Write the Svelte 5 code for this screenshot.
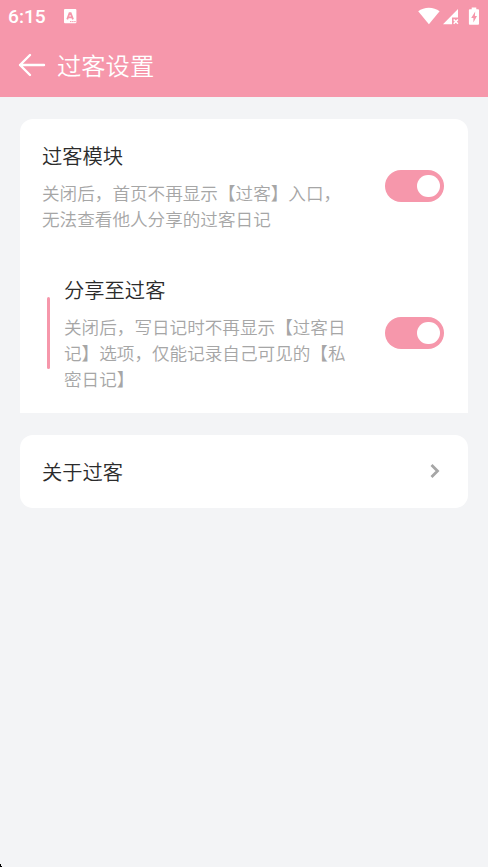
<script>
  let settings = $state([
    {
      title: "过客模块",
      desc: "关闭后，首页不再显示【过客】入口，无法查看他人分享的过客日记",
      on: true,
      nested: false
    },
    {
      title: "分享至过客",
      desc: "关闭后，写日记时不再显示【过客日记】选项，仅能记录自己可见的【私密日记】",
      on: true,
      nested: true
    }
  ]);

  function toggle(item) {
    item.on = !item.on;
  }
</script>

<div class="screen">
  <div class="status">
    <span class="time">6:15</span>
    <svg class="app-icon" width="13" height="15" viewBox="0 0 13 15">
      <rect width="12.4" height="14.3" rx="1" fill="#fff" />
      <path d="M3.2 10.4 5.5 4.2h1.2L9 10.4M4.2 8.3h3.8" fill="none" stroke="#f697ab" stroke-width="1.8" />
      <path d="M6 12.6h6" stroke="#f697ab" stroke-width="1" stroke-dasharray="1.5 .6" />
    </svg>
    <svg class="signals" width="64" height="20" viewBox="0 0 64 20">
      <path d="M.2 4.3C6-.6 15.8-.6 21.6 4.3L10.9 17.2Z" fill="#fff" />
      <path d="M40 2v8.5h-6v6.800H25Z" fill="#fff" />
      <path d="m35.700 12.500 4.200 4.300m0-4.300-4.200 4.300" stroke="#fff" stroke-width="1.500" />
      <path d="M53.700 .5h4.600v1.700h1.800a.9.9 0 0 1 .9.900v13.700a.9.900 0 0 1-.9.900h-8.300a.9.900 0 0 1-.9-.900V3.100a.9.900 0 0 1 .9-.900h1.900Z" fill="#fff" />
      <path d="M57.200 4.600 53.200 11h2.200v4.600L59 9h-2.100Z" fill="#f697ab" />
    </svg>
  </div>

  <header>
    <button class="back" aria-label="返回">
      <svg width="28" height="24" viewBox="0 0 28 24" fill="none" stroke="#fff" stroke-width="2.4" stroke-linecap="round" stroke-linejoin="round">
        <path d="M26 12H2M12 2 2 12l10 10" />
      </svg>
    </button>
    <h1>过客设置</h1>
  </header>

  <main>
    <section class="card group">
      {#each settings as item}
        <div class="row" class:nested={item.nested}>
          {#if item.nested}
            <span class="bar"></span>
          {/if}
          <div class="text">
            <h2>{item.title}</h2>
            <p>{item.desc}</p>
          </div>
          <button
            class="switch"
            class:on={item.on}
            role="switch"
            aria-checked={item.on}
            aria-label={item.title}
            onclick={() => toggle(item)}
          >
            <span class="knob"></span>
          </button>
        </div>
      {/each}
    </section>

    <section class="card link">
      <h2>关于过客</h2>
      <svg width="10" height="14" viewBox="0 0 10 14" fill="none" stroke="#a6a6a6" stroke-width="2.8">
        <path d="m1.5 1 6 6-6 6" />
      </svg>
    </section>
  </main>
  <svg class="corner" width="2" height="3" viewBox="0 0 2 3">
    <path d="M0 0h1v2h1v1H0Z" />
  </svg>
</div>

<style>
  :global(body) {
    background: #f3f4f6;
  }
  .screen {
    position: relative;
    box-sizing: border-box;
    height: 867px;
    background: #f3f4f6;
    font-family: "Noto Sans CJK SC", sans-serif;
    overflow: hidden;
  }
  .status {
    display: flex;
    align-items: center;
    box-sizing: border-box;
    height: 33px;
    padding: 0 6px 0 8px;
    background: #f697ab;
    color: #fff;
  }
  .time {
    width: 56px;
    font: 500 19.2px/34px Roboto, sans-serif;
  }
  .signals {
    margin-left: auto;
  }
  header {
    display: flex;
    align-items: center;
    height: 64.4px;
    padding-left: 18px;
    background: #f697ab;
    color: #fff;
  }
  button {
    padding: 0;
    border: 0;
    background: none;
  }
  .back {
    display: flex;
    width: 39px;
  }
  h1,
  h2,
  p {
    margin: 0;
    font-weight: 350;
  }
  h1 {
    font-size: 24.3px;
    line-height: 36px;
  }
  main {
    padding: 21.6px 20px;
  }
  .card {
    background: #fff;
    border-radius: 13px;
  }
  .group {
    border-radius: 13px 13px 0 0;
  }
  .row {
    display: flex;
    align-items: center;
    box-sizing: border-box;
    height: 134px;
    padding: 0 24px 0 22px;
  }
  .nested {
    height: 160px;
    padding-left: 27px;
  }
  .bar {
    width: 3px;
    height: 72px;
    margin-right: 14px;
    border-radius: 2px;
    background: #f697ab;
  }
  .text {
    flex: 1;
    margin-right: 37px;
  }
  h2 {
    color: #2b2b2b;
    font-size: 20.3px;
    line-height: 30px;
  }
  p {
    margin-top: 10px;
    color: #a6a6a6;
    font-size: 17.6px;
    line-height: 26px;
  }
  .switch {
    display: flex;
    align-items: center;
    box-sizing: border-box;
    width: 59px;
    height: 32px;
    padding: 0 4.5px;
    border-radius: 16px;
    background: #ddd;
  }
  .switch.on {
    justify-content: flex-end;
    background: #f697ab;
  }
  .knob {
    width: 22.5px;
    height: 22.5px;
    border-radius: 50%;
    background: #fff;
  }
  .link {
    display: flex;
    align-items: center;
    justify-content: space-between;
    height: 73px;
    margin-top: 22px;
    padding: 0 28px 0 22px;
  }
  .corner {
    position: absolute;
    left: 0;
    bottom: 0;
  }
</style>
